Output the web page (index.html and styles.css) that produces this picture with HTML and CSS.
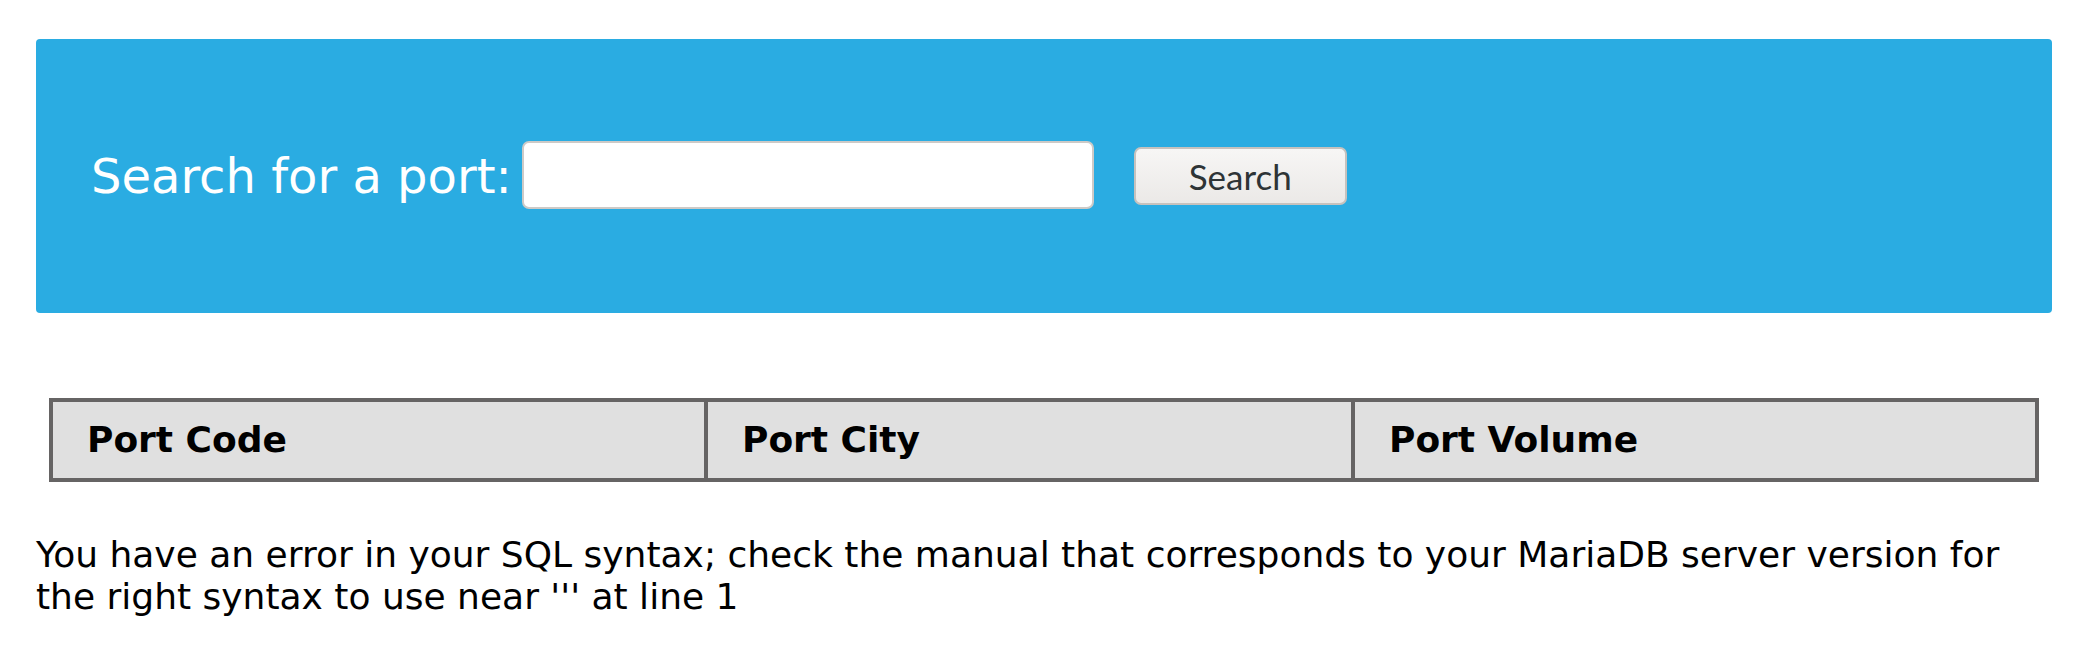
FILE: index.html
```html
<!DOCTYPE html>
<html>
<head>
<meta charset="utf-8">
<title>Port search</title>
<link rel="stylesheet" href="styles.css">
</head>
<body>
<div class="page">
  <form class="search-panel">
    <label class="search-label" for="q">Search for a port:</label>
    <input class="search-input" id="q" type="text">
    <button class="search-button" type="button">Search</button>
  </form>
  <table class="ports">
    <colgroup>
      <col class="col-code">
      <col class="col-city">
      <col class="col-volume">
    </colgroup>
    <tr>
      <th>Port Code</th>
      <th>Port City</th>
      <th>Port Volume</th>
    </tr>
  </table>
  <p class="error">You have an error in your SQL syntax; check the manual that corresponds to your MariaDB server version for the right syntax to use near ''' at line 1</p>
</div>
</body>
</html>
```
FILE: styles.css
```css
html, body {
  margin: 0;
  padding: 0;
  background: #ffffff;
}
body {
  font-family: "DejaVu Sans", sans-serif;
  color: #000;
}
.page {
  padding: 39px 38px 0 36px;
}
.search-panel {
  display: flex;
  align-items: center;
  height: 274px;
  box-sizing: border-box;
  padding-left: 55px;
  background: #2aace2;
  border-radius: 4px;
  margin: 0;
}
.search-label {
  font-size: 48px;
  line-height: 56px;
  color: #ffffff;
  margin-right: 10px;
}
.search-input {
  width: 572px;
  height: 68px;
  box-sizing: border-box;
  border: 2px solid #cdcac7;
  border-radius: 7px;
  background: #ffffff;
  margin: 0 40px 0 0;
  padding: 0 10px;
  font-size: 30px;
  position: relative;
  top: -1px;
}
.search-button {
  width: 213px;
  height: 58px;
  box-sizing: border-box;
  border: 2px solid #c6c2be;
  border-radius: 7px;
  background: linear-gradient(#f7f6f5, #ebe9e7);
  font-family: Lato, "Open Sans", sans-serif;
  font-size: 35px;
  color: #2e3436;
  padding: 0;
  margin: 0;
}
.ports {
  border-collapse: collapse;
  table-layout: fixed;
  width: 1986px;
  margin: 85px 0 0 13px;
  background: #e0e0e0;
}
.col-code { width: 655px; }
.col-city { width: 647px; }
.col-volume { width: 684px; }
.ports th {
  border: 4px solid #666464;
  font-size: 36px;
  line-height: 42px;
  font-weight: bold;
  text-align: left;
  padding: 17px 34px;
}
.error {
  font-size: 36px;
  line-height: 42px;
  margin: 52px 0 0 0;
}
```
